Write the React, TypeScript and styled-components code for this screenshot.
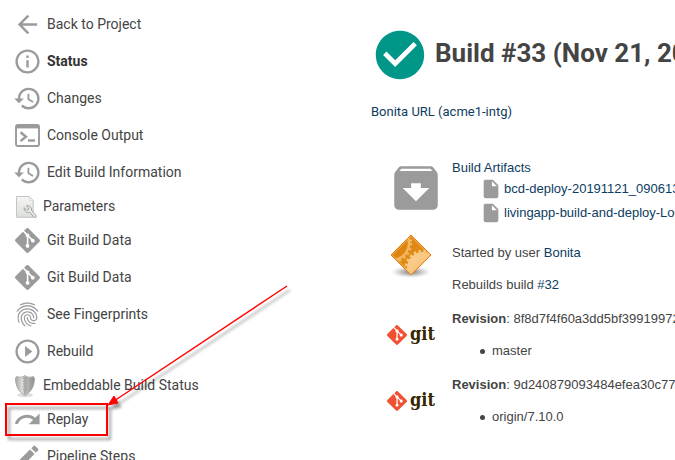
import React from "react";
import styled, { createGlobalStyle } from "styled-components";
import {
  MdArrowBack,
  MdInfoOutline,
  MdHistory,
  MdFingerprint,
  MdPlayCircleOutline,
  MdRedo,
  MdEdit,
  MdArchive,
  MdInsertDriveFile,
  MdCheckCircle,
} from "react-icons/md";
import { SiGit } from "react-icons/si";

const GlobalStyle = createGlobalStyle`
  * { box-sizing: border-box; }
  body {
    margin: 0;
    overflow: hidden;
    background: #fff;
    color: #444;
    font-family: Roboto, sans-serif;
  }
`;

const Page = styled.div`
  display: grid;
  grid-template-columns: 371px minmax(0, 1fr);
  align-items: start;
`;

const TaskList = styled.ul`
  list-style: none;
  margin: 0;
  padding: 6px 0 0 13px;
`;

const Task = styled.li<{ $compact?: boolean }>`
  position: relative;
  display: flex;
  height: ${(p) => (p.$compact ? 31 : 37)}px;
`;

const TaskLink = styled.a<{ $active?: boolean }>`
  display: flex;
  align-items: center;
  gap: 5px;
  color: ${(p) => (p.$active ? "#333" : "#444")};
  font-size: 14px;
  line-height: 20px;
  font-weight: ${(p) => (p.$active ? 700 : 400)};
  text-decoration: none;
  white-space: nowrap;
`;

const TaskIcon = styled.span<{ $compact?: boolean }>`
  display: flex;
  align-items: center;
  justify-content: center;
  width: ${(p) => (p.$compact ? 25 : 29)}px;
  color: #9b9b9b;
`;

const TaskLabel = styled.span`
  padding-bottom: 2px;
`;

const Callout = styled.svg`
  position: absolute;
  left: -13px;
  top: -106px;
  overflow: visible;
  pointer-events: none;
  z-index: 1;
`;

const Main = styled.main`
  min-width: 0;
  padding-top: 26px;
`;

const Title = styled.h1`
  display: flex;
  align-items: center;
  gap: 6px;
  margin: 0;
  color: #444;
  font-size: 26px;
  line-height: 32px;
  font-weight: 700;
  white-space: nowrap;
`;

const TitleText = styled.span`
  padding-bottom: 4px;
`;

const TitleIcon = styled(MdCheckCircle)`
  flex: none;
  color: #009688;
`;

const Link = styled.a`
  color: #0d3c61;
  text-decoration: none;
`;

const Description = styled.p`
  margin: 19px 0 38px;
  font-size: 13px;
  line-height: 18px;
`;

const Entry = styled.section<{ $space?: number }>`
  display: grid;
  grid-template-columns: 81px max-content;
  align-items: center;
  margin-top: ${(p) => p.$space ?? 0}px;
  font-family: "Liberation Sans", Arial, sans-serif;
  font-size: 13px;
  line-height: 18px;
  white-space: nowrap;
`;

const EntryIcon = styled.div<{ $left: number; $top?: boolean }>`
  display: flex;
  align-items: center;
  align-self: ${(p) => (p.$top ? "start" : "center")};
  padding-left: ${(p) => p.$left}px;
  color: #9b9b9b;
`;

const Causes = styled.div`
  display: flex;
  flex-direction: column;
  gap: 14px;
  padding-top: 10px;
`;

const FileTable = styled.table`
  border-collapse: collapse;
  margin-left: 28px;

  td {
    height: 24px;
    padding: 0 2px 0 0;
  }

  svg {
    display: block;
  }
`;

const Branches = styled.ul`
  list-style: none;
  margin: 14px 0 0;
  padding-left: 28px;
`;

const Branch = styled.li`
  display: flex;
  align-items: center;
  gap: 7px;

  &::before {
    content: "";
    width: 5px;
    height: 5px;
    border-radius: 50%;
    background: #444;
  }
`;

const GitBrand = styled.div`
  display: flex;
  align-items: center;
  gap: 3px;
  color: #f05133;
`;

const GitWord = styled.span`
  padding-bottom: 2px;
  color: #362701;
  font: bold 18px/20px "DejaVu Serif Condensed", "DejaVu Serif", serif;
`;

const ConsoleIcon = () => (
  <svg width="25" height="23" viewBox="0 0 25 23" fill="none" aria-hidden="true">
    <rect x="1" y="1" width="23" height="21" rx="1.8" stroke="currentColor" strokeWidth="1.9" />
    <path d="M1 1.4h23v3H1z" fill="currentColor" />
    <path d="M5.5 8.3l5.4 4.4-5.4 4.4" stroke="currentColor" strokeWidth="2.5" />
    <path d="M13 16.5h7" stroke="currentColor" strokeWidth="2.4" />
  </svg>
);

const ParametersIcon = () => (
  <svg width="25" height="24" viewBox="0 0 25 24" fill="none" aria-hidden="true">
    <defs>
      <linearGradient id="sheet" x1="0" y1="0" x2="0" y2="1">
        <stop offset="0" stopColor="#f5f6f3" />
        <stop offset="1" stopColor="#dcdeda" />
      </linearGradient>
    </defs>
    <path d="M3.5 1.5h12.7l4 4v16.8H3.5z" fill="url(#sheet)" stroke="#c3c5c1" />
    <path d="M16 1.7c.8 1.4.7 2.8.3 4 1.3-.4 2.6-.4 3.7 0z" fill="#fff" stroke="#cfd1cd" strokeWidth=".7" />
    <path
      d="M11.2 12.6l2.5 2.5 1.7-.4.3-1.7-2.3-2.1c2.4-.6 4.9.7 5.1 3.2l.1 1.4 4.4 4.8c1.1 1.5-.5 3-2 1.9l-4.2-4.8c-3 .9-6.2-1.4-5.6-4.8z"
      fill="#e8e9e6"
      stroke="#999b97"
      strokeWidth=".9"
    />
  </svg>
);

const ShieldIcon = () => (
  <svg width="25" height="24" viewBox="0 0 25 24" aria-hidden="true">
    <defs>
      <linearGradient id="shield">
        <stop offset="0" stopColor="#a5a5a2" />
        <stop offset=".35" stopColor="#deded9" />
        <stop offset=".5" stopColor="#c0c0bd" />
        <stop offset="1" stopColor="#8f8f8c" />
      </linearGradient>
    </defs>
    <ellipse cx="12" cy="21" rx="8" ry="2.2" fill="#ddd" />
    <path
      d="M12 1.5l2 1.4c2.3.5 4.5.4 6.3-.4l1.2 1.7c-.1 7.6-2.7 13.1-9.5 17.3C5.2 17.3 2.6 11.8 2.5 4.2l1.2-1.7c1.8.8 4 .9 6.3.4z"
      fill="url(#shield)"
      stroke="#aaa"
    />
    <path d="M12 3v17" stroke="#898986" strokeWidth=".8" />
    <path d="M10.5 4v14M13.5 4v14" stroke="#858582" strokeWidth=".8" strokeDasharray=".8 2" />
  </svg>
);

const CauseDiamond = () => (
  <svg width="42" height="44" viewBox="0 0 42 44" aria-hidden="true">
    <defs>
      <linearGradient id="plate" x1="0" y1="0" x2="1" y2="1">
        <stop offset="0" stopColor="#d77b09" />
        <stop offset="1" stopColor="#e89a22" />
      </linearGradient>
      <linearGradient id="largeGear" x1="0" y1="0" x2="1" y2="1">
        <stop offset="0" stopColor="#fbd196" />
        <stop offset="1" stopColor="#f3b45c" />
      </linearGradient>
      <radialGradient id="plateShadow">
        <stop offset="0" stopColor="#555" stopOpacity=".8" />
        <stop offset=".5" stopColor="#888" stopOpacity=".5" />
        <stop offset="1" stopColor="#bbb" stopOpacity="0" />
      </radialGradient>
      <clipPath id="plateClip">
        <path d="M21 1l20 20-20 20L1 21z" />
      </clipPath>
    </defs>
    <ellipse cx="21" cy="38" rx="20" ry="6" fill="url(#plateShadow)" />
    <path d="M21 1l20 20-20 20L1 21z" fill="url(#plate)" />
    <g clipPath="url(#plateClip)">
      <circle cx="2" cy="9" r="17" fill="none" stroke="#f4b65c" strokeWidth="2.5" />
      <circle cx="2" cy="9" r="19" fill="none" stroke="#f4b65c" strokeWidth="2.5" strokeDasharray="2.5 2.5" />
      <circle cx="33" cy="34" r="16" fill="url(#largeGear)" />
      <circle cx="33" cy="34" r="17" fill="none" stroke="#f9c983" strokeWidth="2.5" strokeDasharray="2.5 2.5" />
    </g>
    <path d="M21 2.5L39.5 21 21 39.5 2.5 21z" fill="none" stroke="#f8bd68" strokeWidth=".8" />
    <path d="M21 1l20 20-20 20L1 21z" fill="none" stroke="#e97b16" />
  </svg>
);

const ReplayCallout = () => (
  <Callout width="300" height="160" viewBox="0 0 300 160" aria-hidden="true">
    <defs>
      <filter id="calloutShadow" x="-10%" y="-10%" width="125%" height="125%">
        <feDropShadow dx="3" dy="4" stdDeviation="1.5" floodColor="#000" floodOpacity=".4" />
      </filter>
    </defs>
    <g filter="url(#calloutShadow)">
      <rect x="6" y="109" width="101" height="31" fill="none" stroke="#f00" strokeWidth="2" />
      <path d="M287 -9L114 106" stroke="#f00" strokeWidth="1.5" />
      <path d="M108 110l6-9 4 7z" fill="#f00" stroke="#f00" />
    </g>
  </Callout>
);

type TaskItem = {
  label: string;
  icon: React.ReactNode;
  compact?: boolean;
  active?: boolean;
  callout?: boolean;
};

const tasks: TaskItem[] = [
  { label: "Back to Project", icon: <MdArrowBack size={29} /> },
  { label: "Status", icon: <MdInfoOutline size={29} />, active: true },
  { label: "Changes", icon: <MdHistory size={29} /> },
  { label: "Console Output", icon: <ConsoleIcon /> },
  { label: "Edit Build Information", icon: <MdHistory size={29} /> },
  { label: "Parameters", icon: <ParametersIcon />, compact: true },
  { label: "Git Build Data", icon: <SiGit size={25} /> },
  { label: "Git Build Data", icon: <SiGit size={25} /> },
  { label: "See Fingerprints", icon: <MdFingerprint size={29} /> },
  { label: "Rebuild", icon: <MdPlayCircleOutline size={29} /> },
  { label: "Embeddable Build Status", icon: <ShieldIcon />, compact: true },
  { label: "Replay", icon: <MdRedo size={29} />, callout: true },
  { label: "Pipeline Steps", icon: <MdEdit size={29} /> },
];

const files = ["bcd-deploy-20191121_090613.log", "livingapp-build-and-deploy-Local.zip"];

const revisions = [
  { hash: "8f8d7f4f60a3dd5bf39919972301c6f4", branch: "master" },
  { hash: "9d240879093484efea30c77d1b25ae80", branch: "origin/7.10.0" },
];

export default function App() {
  return (
    <>
      <GlobalStyle />
      <Page>
        <nav aria-label="Build">
          <TaskList>
            {tasks.map((task, i) => (
              <Task key={i} $compact={task.compact}>
                <TaskLink href="#" $active={task.active}>
                  <TaskIcon $compact={task.compact}>{task.icon}</TaskIcon>
                  <TaskLabel>{task.label}</TaskLabel>
                </TaskLink>
                {task.callout && <ReplayCallout />}
              </Task>
            ))}
          </TaskList>
        </nav>
        <Main>
          <Title>
            <TitleIcon size={58} />
            <TitleText>Build #33 (Nov 21, 2019)</TitleText>
          </Title>
          <Description>
            <Link href="#">Bonita URL (acme1-intg)</Link>
          </Description>
          <Entry>
            <EntryIcon $left={16} $top>
              <MdArchive size={58} />
            </EntryIcon>
            <div>
              <Link href="#">Build Artifacts</Link>
              <FileTable>
                <tbody>
                  {files.map((file) => (
                    <tr key={file}>
                      <td>
                        <MdInsertDriveFile size={22} color="#9b9b9b" />
                      </td>
                      <td>
                        <Link href="#">{file}</Link>
                      </td>
                    </tr>
                  ))}
                </tbody>
              </FileTable>
            </div>
          </Entry>
          <Entry $space={9}>
            <EntryIcon $left={19} $top>
              <CauseDiamond />
            </EntryIcon>
            <Causes>
              <span>
                Started by user <Link href="#">Bonita</Link>
              </span>
              <span>
                Rebuilds build <Link href="#">#32</Link>
              </span>
            </Causes>
          </Entry>
          {revisions.map((rev) => (
            <Entry key={rev.hash} $space={16}>
              <EntryIcon $left={16}>
                <GitBrand>
                  <SiGit size={20} />
                  <GitWord>git</GitWord>
                </GitBrand>
              </EntryIcon>
              <div>
                <b>Revision</b>: {rev.hash}
                <Branches>
                  <Branch>{rev.branch}</Branch>
                </Branches>
              </div>
            </Entry>
          ))}
        </Main>
      </Page>
    </>
  );
}
